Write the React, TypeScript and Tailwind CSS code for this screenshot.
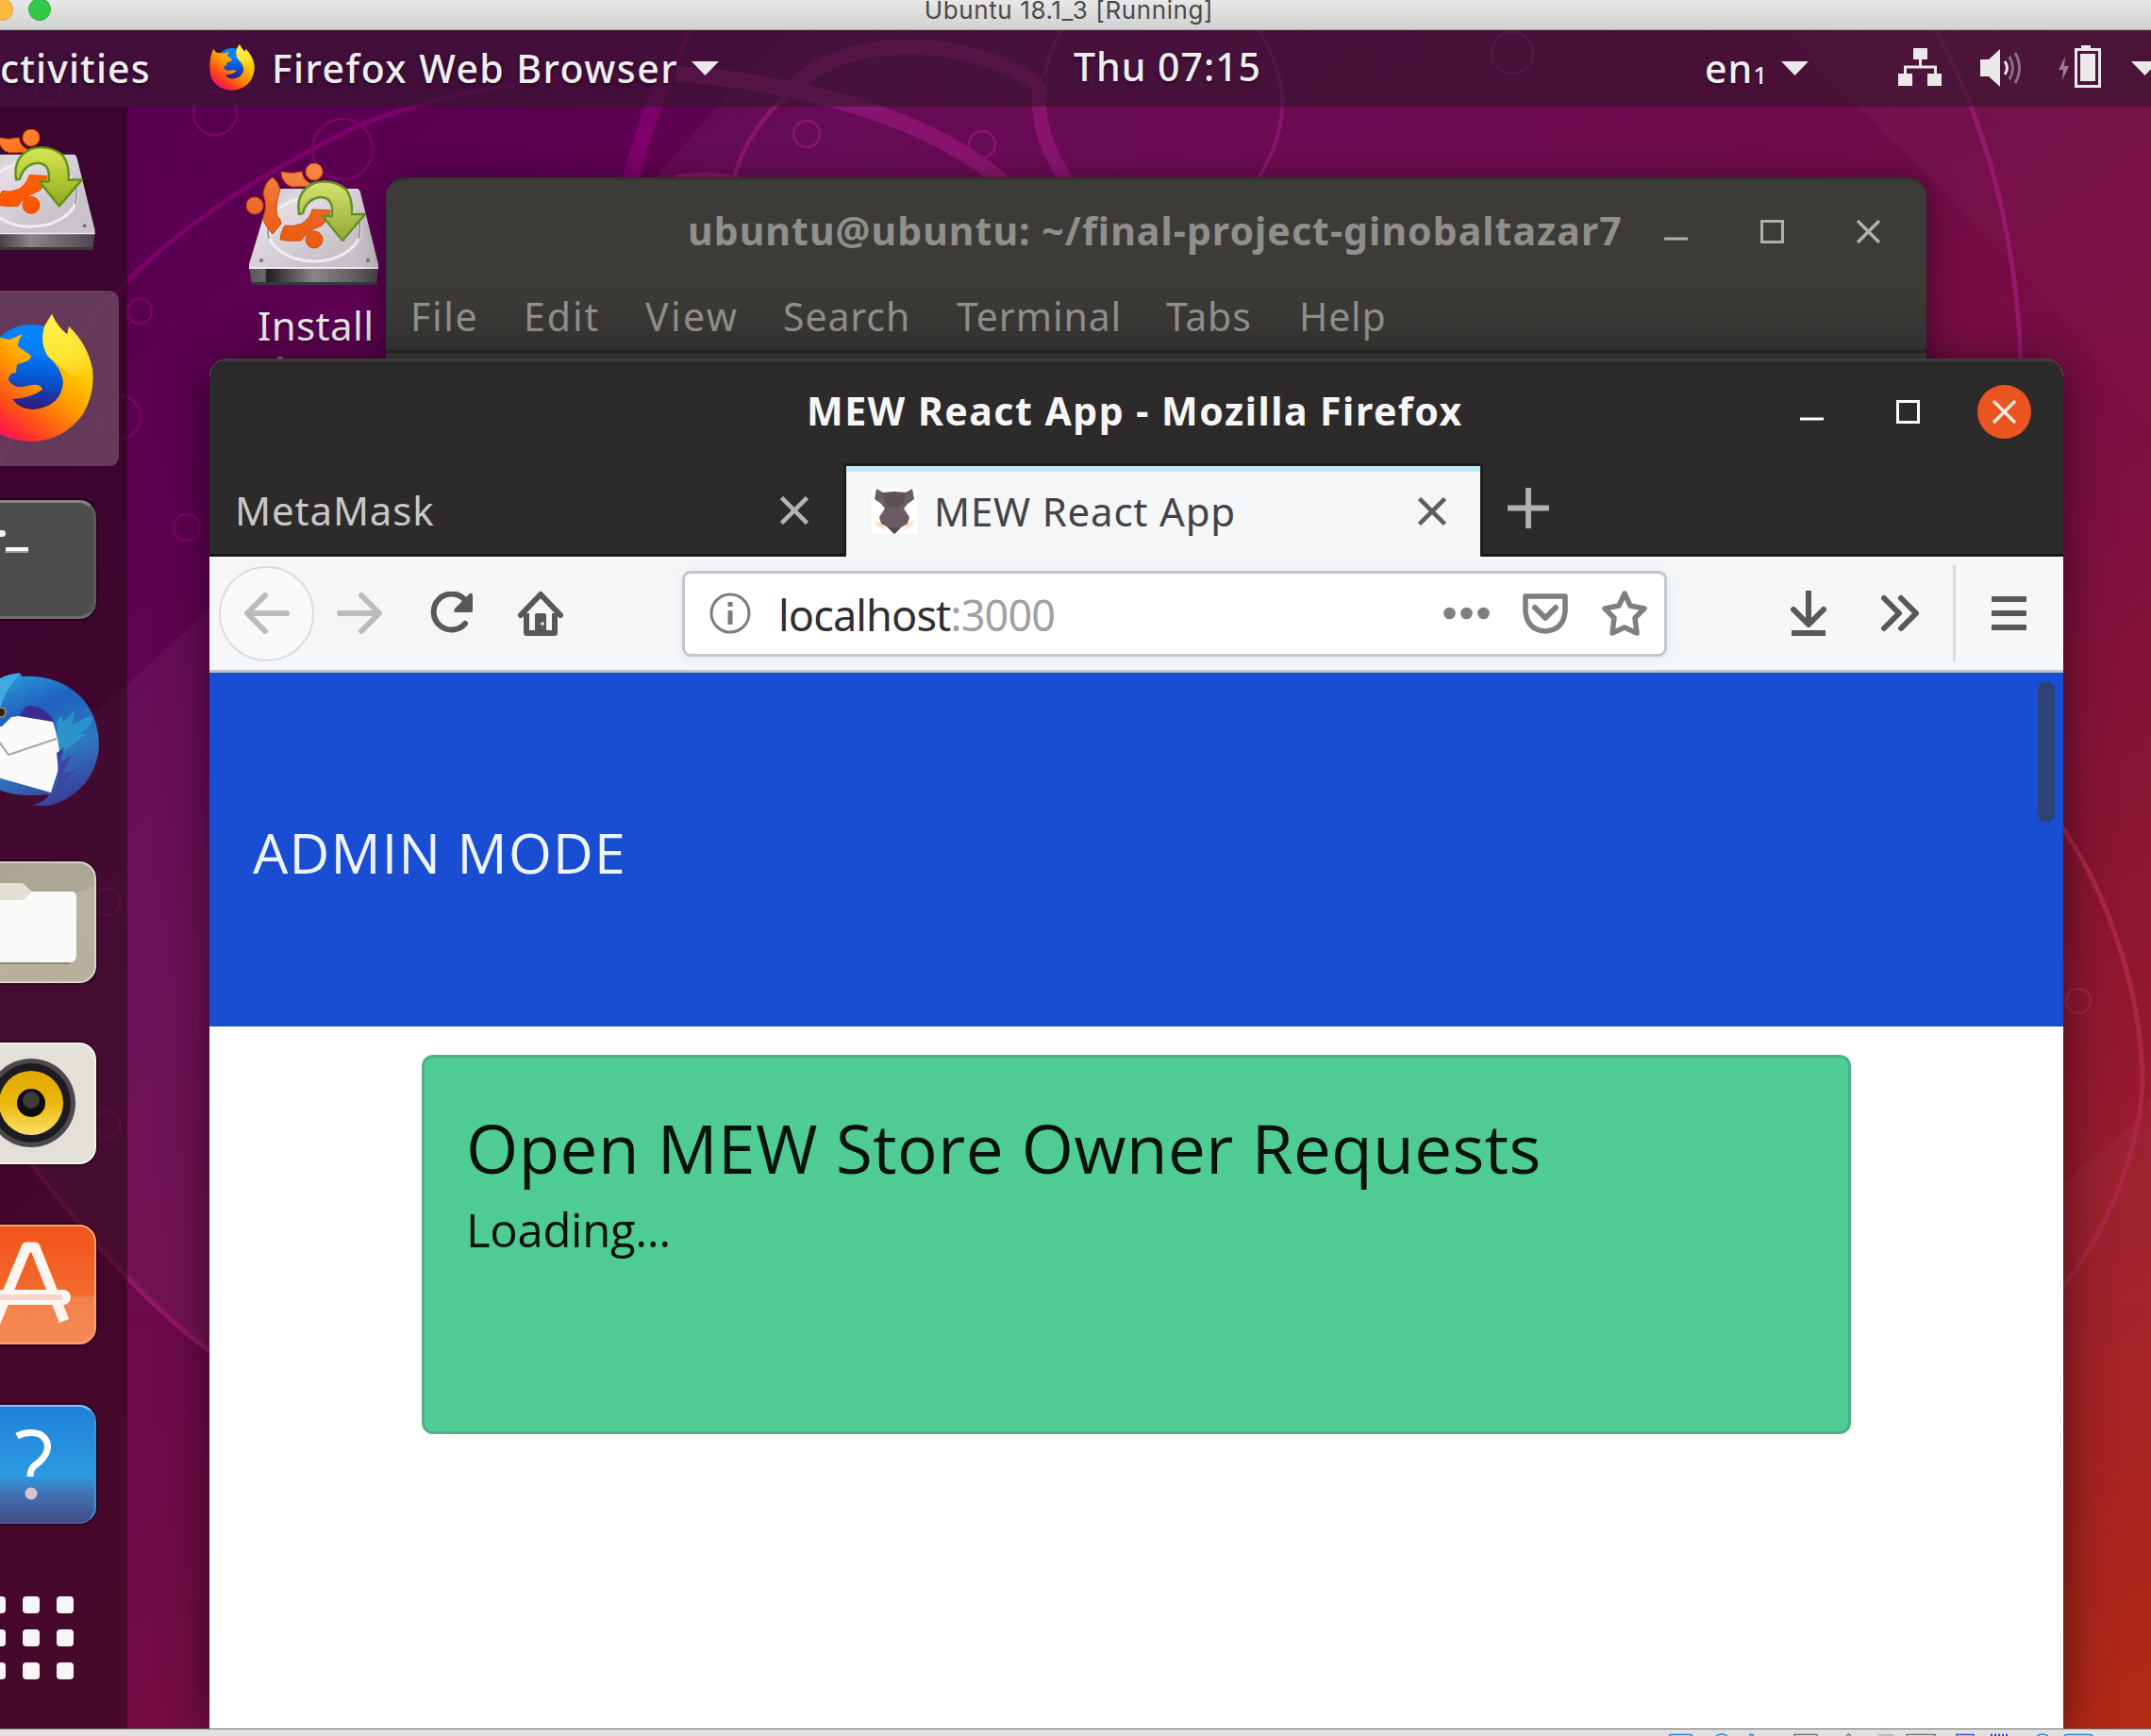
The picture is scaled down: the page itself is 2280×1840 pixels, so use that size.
import React from "react";

function Wallpaper() {
  return (
    <svg className="absolute inset-0 h-full w-full" viewBox="0 32 2280 1800" fill="none" preserveAspectRatio="none">
      <defs>
        <linearGradient id="wa" x1="640" y1="0" x2="1900" y2="0" gradientUnits="userSpaceOnUse">
          <stop offset="0" stopColor="#ffffff" stopOpacity="0.04" />
          <stop offset="1" stopColor="#ffffff" stopOpacity="0" />
        </linearGradient>
        <linearGradient id="wb" x1="0" y1="1200" x2="0" y2="1600" gradientUnits="userSpaceOnUse">
          <stop offset="0" stopColor="#ffffff" stopOpacity="0.03" />
          <stop offset="1" stopColor="#ffffff" stopOpacity="0" />
        </linearGradient>
        <linearGradient id="wc" x1="0" y1="100" x2="0" y2="700" gradientUnits="userSpaceOnUse">
          <stop offset="0" stopColor="#ffffff" stopOpacity="0.025" />
          <stop offset="1" stopColor="#ffffff" stopOpacity="0" />
        </linearGradient>
      </defs>
      <path d="M832 32L640 250L900 600H1900V32Z" fill="url(#wa)" />
      <path d="M222 645L0 850V1190Q100 1330 222 1433Z" fill="#ffffff" opacity="0.045" />
      <path d="M1890 32L2153 300L2280 450V32Z" fill="url(#wc)" />
      <path d="M2187 1255L2263 1188L2280 1165V1600H2187Z" fill="url(#wb)" />
      <g stroke="#7d006b">
        <path strokeWidth="5" d="M0 490C35 415 85 350 133 300C200 230 300 172 378 134C450 105 560 78 717 76" />
        <path strokeWidth="5" d="M732 32L712 75" />
        <path strokeWidth="18" d="M708 72C692 110 680 145 668 192" />
      </g>
      <g stroke="#881470">
        <path strokeWidth="17" d="M717 78C850 88 985 125 1062 192" />
        <path strokeWidth="5" d="M777 192C786 158 805 125 836 100" />
        <path strokeWidth="16" d="M834 98C890 35 1020 35 1102 90" />
        <path strokeWidth="15" d="M1102 88C1098 130 1110 160 1131 192" />
        <path strokeWidth="4" d="M1107 80C1110 62 1118 45 1125 32" />
        <path strokeWidth="4" d="M1334 32C1368 85 1368 135 1332 192" />
        <path strokeWidth="5" d="M715 188C740 184 760 184 785 190" />
        <path stroke="#96186a" strokeWidth="5" d="M2052 32C2105 130 2138 250 2142 385" />
        <path stroke="#911765" strokeWidth="5" d="M30 1230C85 1300 150 1380 225 1434" />
        <path stroke="#ac2644" strokeWidth="5" d="M2180 868C2235 945 2271 1055 2271 1150C2266 1230 2230 1310 2185 1366" />
      </g>
      <g stroke="#7d006b" strokeWidth="2.5">
        <circle cx="244" cy="30" r="13" />
        <circle cx="52" cy="97" r="13" />
        <circle cx="228" cy="120" r="23" />
        <circle cx="363" cy="158" r="32" />
        <circle cx="148" cy="330" r="13" />
        <circle cx="126" cy="442" r="23" />
        <circle cx="198" cy="559" r="14" />
        <circle cx="855" cy="142" r="14" stroke="#881470" />
        <circle cx="1041" cy="153" r="14" stroke="#881470" />
        <circle cx="1603" cy="56" r="22" stroke="#8c1672" />
        <circle cx="113" cy="956" r="14" stroke="#881470" />
        <circle cx="113" cy="1192" r="14" stroke="#881470" />
        <circle cx="2203" cy="1061" r="13" stroke="#a32340" />
      </g>
    </svg>
  );
}

function FirefoxLogo({ id, className }: { id: string; className: string }) {
  return (
    <svg className={className} viewBox="0 0 132 136">
      <defs>
        <linearGradient id={id + "b"} x1="70" y1="10" x2="60" y2="104" gradientUnits="userSpaceOnUse">
          <stop offset="0" stopColor="#0a84ff" />
          <stop offset="0.3" stopColor="#0080ff" />
          <stop offset="0.65" stopColor="#0a50c8" />
          <stop offset="1" stopColor="#36106e" />
        </linearGradient>
        <linearGradient id={id + "f"} x1="108" y1="18" x2="24" y2="128" gradientUnits="userSpaceOnUse">
          <stop offset="0" stopColor="#ffe63a" />
          <stop offset="0.25" stopColor="#ffc400" />
          <stop offset="0.5" stopColor="#ff9200" />
          <stop offset="0.75" stopColor="#ff4a1c" />
          <stop offset="0.9" stopColor="#ff1f3d" />
          <stop offset="1" stopColor="#e31587" />
        </linearGradient>
        <linearGradient id={id + "t"} x1="85" y1="0" x2="112" y2="90" gradientUnits="userSpaceOnUse">
          <stop offset="0" stopColor="#fff44f" />
          <stop offset="0.55" stopColor="#ffe22e" />
          <stop offset="1" stopColor="#ffb000" />
        </linearGradient>
      </defs>
      <circle cx="66" cy="60" r="49" fill={"url(#" + id + "b)"} />
      <path
        fill={"url(#" + id + "f)"}
        d="M88 0Q93 12 104 22L106 13Q126 32 131 58Q134 84 121 106Q99 135 66 135Q18 133 3 92Q-5 50 11 13Q14 20 22 25Q33 24 43 27L57 21Q52 27 52 34L66 44Q66 50 51 53L50 62Q42 62 42 70Q48 80 62 76Q76 72 78 80Q66 89 46 90Q54 101 68 101Q98 98 100 72Q98 56 83 44Q76 30 80 13Z"
      />
      <path
        fill={"url(#" + id + "t)"}
        d="M88 0Q93 14 108 24Q130 44 128 66Q118 62 108 66Q100 56 88 48Q74 36 80 13Z"
      />
    </svg>
  );
}

function InstallerIcon({ id, className }: { id: string; className: string }) {
  return (
    <svg className={className} viewBox="0 0 141 130">
      <defs>
        <linearGradient id={id + "d"} x1="0" y1="27" x2="60" y2="115" gradientUnits="userSpaceOnUse">
          <stop offset="0" stopColor="#c2bcc2" />
          <stop offset="0.4" stopColor="#e3dde3" />
          <stop offset="1" stopColor="#c9c3c9" />
        </linearGradient>
        <linearGradient id={id + "e"} x1="0" y1="0" x2="1" y2="0">
          <stop offset="0" stopColor="#5a545a" />
          <stop offset="0.12" stopColor="#6e686e" />
          <stop offset="0.14" stopColor="#221c22" />
          <stop offset="0.5" stopColor="#8a848a" />
          <stop offset="1" stopColor="#4b464b" />
        </linearGradient>
        <linearGradient id={id + "g"} x1="0" y1="20" x2="0" y2="82" gradientUnits="userSpaceOnUse">
          <stop offset="0" stopColor="#d7e26e" />
          <stop offset="1" stopColor="#93a936" />
        </linearGradient>
        <linearGradient id={id + "o"} x1="0" y1="0" x2="0" y2="90" gradientUnits="userSpaceOnUse">
          <stop offset="0" stopColor="#f58a48" />
          <stop offset="0.6" stopColor="#ee6420" />
          <stop offset="1" stopColor="#ea5a10" />
        </linearGradient>
      </defs>
      <path d="M34 27H117Q120 27 121 31L140 107V112H3V107L26 31Q28 27 34 27Z" fill={"url(#" + id + "d)"} />
      <ellipse cx="72" cy="70" rx="49" ry="34" fill="none" stroke="#f1ecf1" strokeWidth="3" />
      <path d="M24 80Q20 66 30 54M119 80Q123 66 117 54" fill="none" stroke="#8d878d" strokeWidth="1.6" />
      <circle cx="16" cy="103" r="2" fill="#77717a" />
      <circle cx="129" cy="103" r="2" fill="#77717a" />
      <path d="M3 110H140L138 129H6Z" fill={"url(#" + id + "e)"} />
      <path d="M3 110H140V112H3Z" fill="#eee9ee" />
      <path d="M6 126H138V129H6Z" fill="#3a363a" />
      <g fill={"url(#" + id + "o)"} stroke="#c94f0c" strokeWidth="1">
        <path d="M28 15Q34 20 36 28Q30 44 33 56Q37 60 37 64L28 75Q19 66 18 58Q23 46 18 32Q20 20 28 15Z" />
        <path d="M37 9Q48 12 59 9Q60 20 74 24L49 25Q38 22 37 9Z" />
        <path d="M36 81Q36 74 41 66Q50 68 59 64Q68 58 70 49L89 50Q88 60 80 66Q64 72 58 82Q46 83 36 81Z" />
        <circle cx="9" cy="45" r="9" />
        <circle cx="72" cy="9" r="9" />
        <circle cx="72" cy="81" r="9" />
      </g>
      <path
        d="M56 54Q52 30 72 21Q92 16 106 28Q113 38 112 54H126L102 82L81 56H91V48Q90 36 78 36Q64 38 60 53Z"
        fill={"url(#" + id + "g)"}
        stroke="#66902c"
        strokeWidth="2.5"
        strokeLinejoin="round"
      />
    </svg>
  );
}

function ThunderbirdIcon() {
  return (
    <svg className="h-[144px] w-[140px]" viewBox="-35 712 140 144">
      <defs>
        <linearGradient id="tb" x1="0" y1="715" x2="60" y2="856" gradientUnits="userSpaceOnUse">
          <stop offset="0" stopColor="#2f9fdc" />
          <stop offset="0.3" stopColor="#1f62c0" />
          <stop offset="0.65" stopColor="#2f78bd" />
          <stop offset="1" stopColor="#3a3a98" />
        </linearGradient>
      </defs>
      <path
        d="M-30 760Q-15 722 20 713L24 717Q60 715 84 737Q105 757 105 793Q101 829 70 847Q52 857 35 853Q48 850 52 842Q-20 850 -34 800Z"
        fill="url(#tb)"
      />
      <path d="M-35 760Q-10 712 22 714Q0 735 -4 770Z" fill="#3eabe0" />
      <path d="M28 748Q50 748 58 766L16 764Z" fill="#3b2c92" />
      <path d="M60 765L66 758L66 766L80 752L76 768L98 758Q98 770 84 778L92 778L76 790L62 800Z" fill="#2a9fce" opacity="0.75" />
      <path d="M-35 770H2L12 760L20 759L56 765Q66 795 62 815L54 840L-35 815Z" fill="#fafafa" />
      <path d="M-4 782L9 800L60 783" fill="none" stroke="#a8a8a8" strokeWidth="2" />
      <path d="M60 798L68 792L64 808L76 800L66 820L80 816L58 842Q64 825 60 798Z" fill="#3a46a4" />
      <circle cx="1" cy="755" r="5" fill="#2b2018" stroke="#8d8560" strokeWidth="2" />
    </svg>
  );
}

function Tile({ className, children }: { className: string; children?: React.ReactNode }) {
  return <div className={"relative shrink-0 w-[136px] overflow-hidden rounded-[18px] shadow-[0_0_0_2px_rgba(0,0,0,0.35)] " + className}>{children}</div>;
}

function Dock() {
  return (
    <nav className="relative flex h-full w-[135px] flex-col overflow-hidden bg-[rgba(30,8,14,0.5)]">
      <InstallerIcon id="di" className="-ml-[39px] mt-[24px] h-[129px] w-[141px] shrink-0 saturate-125" />
      <div className="mt-[42px] flex h-[186px] w-[126px] shrink-0 items-center rounded-r-[10px] bg-[#87667c]/55">
        <FirefoxLogo id="df" className="-ml-[33px] h-[136px] w-[132px] shrink-0" />
      </div>
      <Tile className="-ml-[34px] mt-[36px] h-[126px] border-y-[3px] border-r-[3px] border-t-[#858585] border-b-[#6e6e6e] border-r-[#5a5a5a] bg-[#4d4d4d]">
        <div className="ml-[30px] mt-[29px] h-[7px] w-[10px] rounded-full bg-[#f0f0f0]" />
        <div className="ml-[40px] mt-[11px] h-[6px] w-[24px] border-b-2 border-[#a0a0a0] bg-white" />
      </Tile>
      <div className="-ml-[35px] mt-[56px] h-[144px] shrink-0">
        <ThunderbirdIcon />
      </div>
      <Tile className="-ml-[34px] mt-[57px] h-[129px] border-2 border-[#d8d4c6] bg-[linear-gradient(155deg,#a8a28f_0%,#aea896_45%,#b8b29f_46%,#b5af9b_100%)]">
        <svg className="h-full w-full" viewBox="-32 914 132 125">
          <path d="M-32 935H24L34 944H78V960H-32Z" fill="#e3dfd4" />
          <path d="M-32 953H24L34 944H76Q81 944 81 950V1012Q81 1019 73 1019H-32Z" fill="#f9f9f8" />
          <path d="M-32 1020H74" stroke="#8f8a78" strokeWidth="2" />
        </svg>
      </Tile>
      <Tile className="-ml-[34px] mt-[63px] h-[129px] border-2 border-[#f4f2ec] bg-[#e4e0d7]">
        <svg className="h-full w-full" viewBox="-32 1106 132 125">
          <defs>
            <linearGradient id="rb" x1="0" y1="0" x2="0" y2="1">
              <stop offset="0" stopColor="#e0a800" />
              <stop offset="0.5" stopColor="#edb70c" />
              <stop offset="1" stopColor="#fbe06a" />
            </linearGradient>
          </defs>
          <circle cx="33" cy="1168" r="47" fill="#4a4a4a" />
          <circle cx="33" cy="1168" r="42" fill="#1c1b24" />
          <circle cx="33" cy="1168" r="34" fill="url(#rb)" />
          <circle cx="33" cy="1168" r="15" fill="#0d0d0d" />
          <circle cx="33" cy="1165" r="9" fill="#3b3b3b" />
        </svg>
      </Tile>
      <Tile className="-ml-[34px] mt-[64px] h-[127px] border-2 border-[#f9a27a] bg-[linear-gradient(180deg,#f2541b_0%,#f26a2e_58%,#f4814a_62%,#f58a55_100%)]">
        <svg className="h-full w-full" viewBox="-32 1300 132 123" fill="none">
          <path d="M-6 1404L28 1322H37L68 1400" stroke="#fff5ee" strokeWidth="11" strokeLinejoin="round" />
          <path d="M-20 1375H67" stroke="#fdf7f4" strokeWidth="16" strokeLinecap="round" />
          <path d="M-20 1375H66" stroke="#f6d2c8" strokeWidth="6" />
        </svg>
      </Tile>
      <Tile className="-ml-[34px] mt-[64px] h-[126px] border-2 border-t-[#8cc4ee] border-r-[#3e92d4] border-b-[#5a5a98] border-l-transparent bg-[linear-gradient(180deg,#1f82d8_0%,#2d9ae2_60%,#4273b4_75%,#424a86_100%)]">
        <svg className="h-full w-full" viewBox="-32 1491 132 122" fill="none">
          <path d="M18 1522Q30 1516 42 1520Q54 1527 49 1540Q45 1548 36 1554Q32 1558 32 1565" stroke="#ffffff" strokeWidth="7" />
          <circle cx="33" cy="1583" r="6.5" fill="#d6c4d2" />
        </svg>
      </Tile>
      <div className="-ml-[12px] mt-[77px] grid w-[90px] grid-cols-3 gap-x-[18px] gap-y-[17px]">
        {Array.from({ length: 9 }, (_, i) => (
          <div key={i} className="h-[18px] w-[18px] rounded-[4px] bg-[#f7f5f6]" />
        ))}
      </div>
    </nav>
  );
}

function Caret({ className }: { className?: string }) {
  return (
    <svg className={"h-[15px] w-[29px] " + (className ?? "")} viewBox="0 0 29 15">
      <path d="M0 0H29L14.5 15Z" fill="#ebe8ea" />
    </svg>
  );
}

function TopBar() {
  return (
    <header className="relative flex h-[81px] shrink-0 items-center bg-[rgba(52,22,45,0.62)] font-['Noto_Sans'] text-[41px] font-medium leading-none text-[#f0edef] [text-shadow:0_2px_4px_rgba(0,0,0,0.5)] [&>*]:shrink-0">
      <span className="w-[161px] whitespace-nowrap tracking-[1.1px]">ctivities</span>
      <FirefoxLogo id="tf" className="ml-[61px] mb-[3px] h-[49px] w-[48px]" />
      <span className="ml-[18px] w-[429px] whitespace-nowrap tracking-[1.45px]">Firefox Web Browser</span>
      <Caret className="ml-[16px]" />
      <span className="ml-[376px] mb-[4px] w-[197px] whitespace-nowrap tracking-[1px]">Thu 07:15</span>
      <span className="ml-[472px] flex w-[63px] items-end whitespace-nowrap tracking-[1px]">
        en<span className="mb-px text-[26px]">1</span>
      </span>
      <Caret className="ml-[18px]" />
      <svg className="ml-[95px] mb-[4px] h-[40px] w-[47px]" viewBox="0 0 47 40" fill="#ebe8ea">
        <path d="M16 0H31V12H16ZM0 27H15V40H0ZM31 27H46V40H31Z" />
        <path d="M23.500 12V20M7.500 28V20H39.500V28" stroke="#ebe8ea" strokeWidth="3" fill="none" />
      </svg>
      <svg className="ml-[40px] mb-[2px] h-[42px] w-[46px]" viewBox="0 0 46 42" fill="none">
        <path d="M0 12H9L21 1V41L9 30H0Z" fill="#ebe8ea" />
        <path d="M26 14Q31 21 26 28" stroke="#ebe8ea" strokeWidth="3" />
        <path d="M31 9Q38 21 31 33M37 5Q46 21 37 37" stroke="#8d6d86" strokeWidth="3" />
      </svg>
      <svg className="ml-[37px] mb-[4px] h-[46px] w-[46px]" viewBox="0 0 46 46">
        <path d="M7 12L0 26H5L4 37L11 22H6Z" fill="#9a7d93" />
        <path d="M24 0H34V4H24Z" fill="#ebe8ea" />
        <path d="M18.500 4.500H43.500V43.500H18.500Z" fill="none" stroke="#ebe8ea" strokeWidth="3" />
        <path d="M23 9H39V38H23Z" fill="#ebe8ea" />
      </svg>
      <Caret className="ml-[31px]" />
    </header>
  );
}

function WindowButtons({ active }: { active?: boolean }) {
  const tone = active ? "#ffffff" : "#b0afad";
  return (
    <div className="flex items-center">
      <svg className="h-[25px] w-[25px]" viewBox="0 0 25 25">
        <path d="M0 18.500H25V21.500H0Z" fill={tone} />
      </svg>
      <svg className="ml-[77px] h-[25px] w-[25px]" viewBox="0 0 25 25" fill="none">
        <path d="M1.500 1.500H23.500V23.500H1.500Z" stroke={tone} strokeWidth="3" />
      </svg>
      <div className={"ml-[61px] flex h-[57px] w-[57px] items-center justify-center rounded-full " + (active ? "bg-[#e95420]" : "")}>
        <svg className="h-[25px] w-[25px]" viewBox="0 0 25 25">
          <path d="M1 1L24 24M24 1L1 24" stroke={active ? "#fbe9e2" : tone} strokeWidth="3.500" />
        </svg>
      </div>
    </div>
  );
}

function TerminalWindow() {
  return (
    <section className="absolute left-[409px] top-[156px] h-[220px] w-[1633px] overflow-hidden rounded-t-[20px] border-t-[3px] border-[#33322f] bg-[#3c3b38] font-['Noto_Sans'] text-[#908f8b] shadow-[0_4px_34px_rgba(0,0,0,0.45)]">
      <div className="flex h-[109px] items-center">
        <h2 className="mb-[3px] ml-[320px] w-[992px] whitespace-nowrap text-[41px] font-bold leading-none tracking-[1.05px]">ubuntu@ubuntu: ~/final-project-ginobaltazar7</h2>
        <div className="mb-px ml-[43px]">
          <WindowButtons />
        </div>
      </div>
      <div className="flex h-[74px] items-center whitespace-nowrap border-b-[3px] border-[#2a2927] bg-linear-to-b from-[#3c3b38] to-[#373533] text-[41px] leading-none">
        <span className="ml-[26px] w-[120px] tracking-[1.7px]">File</span>
        <span className="w-[129px] tracking-[2px]">Edit</span>
        <span className="w-[146px] tracking-[2.4px]">View</span>
        <span className="w-[184px] tracking-[0.9px]">Search</span>
        <span className="w-[222px] tracking-[0.9px]">Terminal</span>
        <span className="w-[141px] tracking-[0.8px]">Tabs</span>
        <span className="tracking-[0.8px]">Help</span>
      </div>
    </section>
  );
}

function CloseX({ className }: { className: string }) {
  return (
    <svg className={"h-[30px] w-[30px] shrink-0 " + className} viewBox="0 0 30 30" fill="none" stroke="currentColor" strokeWidth="4.500">
      <path d="M1.500 1.500L28.500 28.500M28.500 1.500L1.500 28.500" />
    </svg>
  );
}

function TabStrip() {
  return (
    <div className="flex h-[99px] bg-[#2c2a2b] text-[42px] leading-none">
      <div className="flex w-[672px] items-center border-b-[3px] border-[#171617] pl-[27px] pt-[4px] text-[#c9c8c8]">
        <span className="w-[578px] tracking-[0.85px]">MetaMask</span>
        <CloseX className="text-[#b4b3b3]" />
      </div>
      <div className="flex w-[678px] border-x-[3px] border-t-[3px] border-[#1d1c1c]">
        <div className="flex w-full items-center border-t-[6px] border-[#bfeafb] bg-[#f4f6f8] pb-[7px] text-[#454346]">
          <svg className="ml-[27px] h-[48px] w-[48px] bg-white" viewBox="0 0 48 48">
            <path d="M3 33L12 38L14 44L5 39ZM45 33L36 38L34 44L43 39Z" fill="#ffe0c0" />
            <path d="M5 0L12 4H36L43 0L45 11L38 16L34 21L40 30L38 37L31 41L24 48L17 41L10 37L8 30L14 21L10 16L3 11Z" fill="#6b5b62" />
            <path d="M12 4L24 3L36 4L34 14L28 20H20L14 14Z" fill="#5f5058" />
            <path d="M17 41H31L24 48Z" fill="#554850" />
          </svg>
          <span className="ml-[18px] w-[513px] whitespace-nowrap tracking-[0.8px]">MEW React App</span>
          <CloseX className="text-[#5f5d60]" />
        </div>
      </div>
      <div className="flex grow items-center border-b-[3px] border-[#171617]">
        <svg className="ml-[26px] mb-px h-[43px] w-[44px]" viewBox="0 0 44 43">
          <path d="M22 0V43M0 21.500H44" stroke="#b2b1b1" strokeWidth="6" />
        </svg>
      </div>
    </div>
  );
}

function Toolbar() {
  return (
    <div className="flex h-[123px] items-center border-b-[3px] border-[#bcc3cb] bg-[#f5f6f8]">
      <div className="ml-[10px] flex h-[101px] w-[101px] items-center justify-center rounded-full border-2 border-[#dcdcdd] bg-[#f9f9fa]">
        <svg className="h-[44px] w-[50px]" viewBox="0 0 50 44" fill="none" stroke="#bbbbbc" strokeWidth="6" strokeLinecap="round" strokeLinejoin="round">
          <path d="M23 3L4 22L23 41M4 22H46" />
        </svg>
      </div>
      <svg className="ml-[23px] h-[44px] w-[50px]" viewBox="0 0 50 44" fill="none" stroke="#bbbbbc" strokeWidth="6" strokeLinecap="round" strokeLinejoin="round">
        <path d="M27 3L46 22L27 41M46 22H4" />
      </svg>
      <svg className="ml-[49px] h-[46px] w-[48px]" viewBox="0 0 48 46" fill="none">
        <path d="M37 8A19 19 0 1 0 38 34" stroke="#58585a" strokeWidth="6" strokeLinecap="round" />
        <path d="M43 2Q46 1 46 5V20Q46 22 43 22H28Q25 21 27 18Z" fill="#58585a" />
      </svg>
      <svg className="ml-[45px] h-[50px] w-[50px]" viewBox="0 0 50 50" fill="none">
        <path d="M4 27L25 5L46 27" stroke="#58585a" strokeWidth="6" strokeLinecap="round" strokeLinejoin="round" />
        <path d="M10 25V46H40V25" stroke="#58585a" strokeWidth="6" strokeLinejoin="round" />
        <path d="M19 27Q19 25 21 25H29Q31 25 31 27V47H19Z" fill="#58585a" />
        <circle cx="27" cy="36" r="1.800" fill="#f5f6f8" />
      </svg>
      <div className="ml-[125px] flex h-[91px] w-[1044px] items-center rounded-[9px] border-[3px] border-[#c1c7cd] bg-white shadow-[0_2px_12px_rgba(0,0,0,0.07)]">
        <svg className="ml-[26px] h-[44px] w-[44px]" viewBox="0 0 44 44" fill="none">
          <circle cx="22" cy="22" r="20" stroke="#7d7d7d" strokeWidth="3" />
          <path d="M22 19V34M22 10V15" stroke="#7d7d7d" strokeWidth="5" />
        </svg>
        <span className="ml-[29px] w-[705px] whitespace-nowrap pt-[2px] font-['Noto_Sans'] text-[45px] leading-none tracking-[-0.85px] text-[#2f2e31]">
          localhost<span className="text-[#a09fa1]">:3000</span>
        </span>
        <svg className="h-[14px] w-[49px]" viewBox="0 0 49 14" fill="#7f7f80">
          <circle cx="6.500" cy="7" r="6.300" />
          <circle cx="24.500" cy="7" r="6.300" />
          <circle cx="42.500" cy="7" r="6.300" />
        </svg>
        <svg className="ml-[34px] h-[44px] w-[50px]" viewBox="0 0 50 44" fill="none" stroke="#7f7f80">
          <path d="M4 4H46V20Q44 40 25 41Q6 40 4 20Z" strokeWidth="5.500" strokeLinejoin="round" />
          <path d="M14 16L25 27L36 16" strokeWidth="6" strokeLinecap="round" strokeLinejoin="round" />
        </svg>
        <svg className="ml-[34px] h-[50px] w-[50px]" viewBox="0 0 50 50" fill="none">
          <path d="M25 4L31 17L46 20L36 30L38 46L25 40L12 46L14 30L4 20L19 17Z" stroke="#7f7f80" strokeWidth="5.500" strokeLinejoin="round" />
        </svg>
      </div>
      <svg className="ml-[130px] h-[50px] w-[40px]" viewBox="0 0 40 50" fill="none" stroke="#58585a" strokeWidth="6">
        <path d="M20 1V36" />
        <path d="M4 21L20 37L36 21" strokeLinecap="round" strokeLinejoin="round" />
        <path d="M2 46H38" />
      </svg>
      <svg className="ml-[56px] h-[40px] w-[42px]" viewBox="0 0 42 40" fill="none" stroke="#58585a" strokeWidth="6" strokeLinecap="round" strokeLinejoin="round">
        <path d="M4 4L20 20L4 36M22 4L38 20L22 36" />
      </svg>
      <div className="ml-[35px] h-[102px] w-[3px] bg-[#dadcdf]" />
      <div className="ml-[38px] flex flex-col gap-[9px]">
        <div className="h-[6px] w-[37px] rounded-[1px] bg-[#58585a]" />
        <div className="h-[6px] w-[37px] rounded-[1px] bg-[#58585a]" />
        <div className="h-[6px] w-[37px] rounded-[1px] bg-[#58585a]" />
      </div>
    </div>
  );
}

function FirefoxWindow() {
  return (
    <section className="absolute left-[222px] top-[348px] flex h-[1452px] w-[1965px] flex-col overflow-hidden rounded-t-[20px] bg-white font-['Noto_Sans'] shadow-[0_8px_50px_rgba(0,0,0,0.55)]">
      <div className="flex h-[111px] shrink-0 items-center border-t-[3px] border-[#3c3b3a] bg-[#2c2a2b]">
        <h1 className="mb-[3px] ml-[633px] w-[697px] whitespace-nowrap text-[41px] font-bold leading-none tracking-[1.5px] text-[#f7f6f6]">MEW React App - Mozilla Firefox</h1>
        <div className="mb-px ml-[356px]">
          <WindowButtons active />
        </div>
      </div>
      <TabStrip />
      <Toolbar />
      <main className="relative grow bg-white font-['Open_Sans']">
        <div className="flex h-[375px] items-center bg-[#194ed2] pl-[46px] pt-[6px]">
          <p className="whitespace-nowrap text-[59px] leading-none tracking-[1.2px] text-[#eef4ff]">ADMIN MODE</p>
        </div>
        <div className="absolute left-[1938px] top-[9px] h-[150px] w-[18px] rounded-full bg-[#2d4379]" />
        <article className="ml-[225px] mt-[30px] h-[402px] w-[1515px] rounded-[12px] border-[3px] border-[#48b385] bg-[#4fcb95] px-[44px] pt-[54px] text-[#06120d]">
          <h3 className="whitespace-nowrap text-[71px] leading-[84px] tracking-[0.45px]">Open MEW Store Owner Requests</h3>
          <p className="mt-[8px] whitespace-nowrap text-[49px] leading-[72px] tracking-[-0.3px]">Loading...</p>
        </article>
      </main>
    </section>
  );
}

function DesktopShortcut() {
  return (
    <div className="absolute left-[261px] top-[141px] flex h-[208px] w-[148px] flex-col overflow-hidden">
      <InstallerIcon id="si" className="h-[130px] w-[141px] shrink-0" />
      <span className="ml-[12px] mt-[14px] font-['Noto_Sans'] text-[42px] leading-[56px] tracking-[0.4px] text-[#ece4ea] [text-shadow:0_2px_3px_rgba(0,0,0,0.5)]">Install</span>
      <div className="ml-[33px] mt-[5px] h-[2px] w-[6px] bg-[#8a6a9c]" />
    </div>
  );
}

export default function App() {
  return (
    <div className="flex h-[1840px] w-[2280px] flex-col overflow-hidden">
      <div className="relative flex h-[32px] shrink-0 items-start justify-center border-b border-[#a9a7a9] bg-linear-to-b from-[#e8e8e8] to-[#d1d1d1]">
        <div className="absolute -left-[10px] -top-[2px] h-[24px] w-[24px] rounded-full border border-[#e09e3e] bg-[#fdbc40]" />
        <div className="absolute left-[30px] -top-[2px] h-[24px] w-[24px] rounded-full border border-[#2cae3e] bg-[#34c84a]" />
        <span className="-ml-[14px] whitespace-nowrap font-['Inter'] text-[26px] leading-[22px] tracking-[0.6px] text-[#4a4a4a]">Ubuntu 18.1_3 [Running]</span>
      </div>
      <div className="relative flex h-[1800px] shrink-0 flex-col overflow-hidden bg-[linear-gradient(to_bottom_right,#590050_0%,#5c0050_15%,#670650_30%,#700b48_48%,#7c0f40_62%,#8f1630_76%,#a02028_87%,#b52a14_100%)]">
        <Wallpaper />
        <TopBar />
        <div className="h-[1719px]">
          <Dock />
        </div>
        <DesktopShortcut />
        <TerminalWindow />
        <FirefoxWindow />
      </div>
      <div className="h-[8px] shrink-0 overflow-hidden border-t border-[#6e6e6e] bg-[#e1e1e1]">
        <svg className="h-[7px] w-full" viewBox="0 1833 2280 7" fill="#d5eaf8" strokeWidth="1.500">
          <g stroke="#2f86d8">
            <rect x="1769" y="1838.500" width="25" height="12" rx="3" />
            <circle cx="1825" cy="1847" r="9" />
            <path d="M1855 1840V1838.500H1858V1840" />
            <circle cx="2165" cy="1847" r="9" />
            <rect x="2188" y="1838.500" width="30" height="12" rx="3" />
          </g>
          <g stroke="#777777" fill="#f4f4f4">
            <rect x="1902" y="1838.500" width="24" height="12" />
            <path d="M1957 1840L1959.500 1838L1962 1840" />
            <rect x="2021" y="1838.500" width="30" height="12" />
          </g>
          <rect x="1991" y="1838" width="17" height="6" fill="#bdbdbd" />
          <rect x="2074" y="1838.500" width="18" height="12" stroke="#3f55c8" />
          <path d="M2110 1839H2129" stroke="#3f45c0" strokeWidth="2.500" strokeDasharray="2 2" />
        </svg>
      </div>
    </div>
  );
}
